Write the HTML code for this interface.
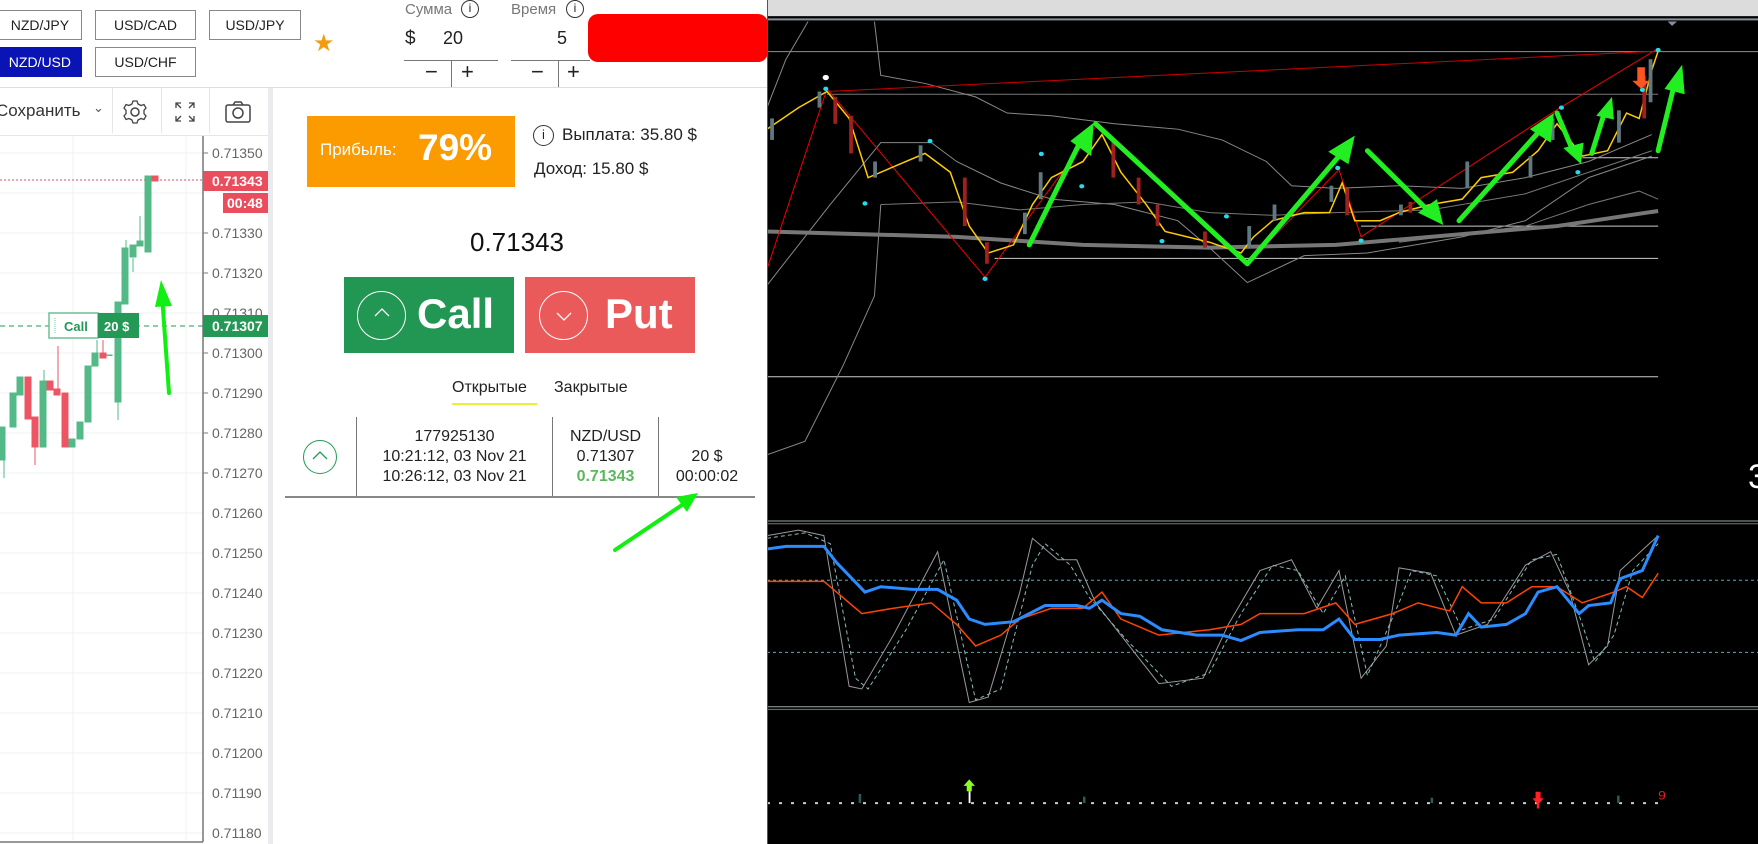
<!DOCTYPE html>
<html><head><meta charset="utf-8"><style>
*{margin:0;padding:0;box-sizing:border-box}
body{width:1758px;height:844px;overflow:hidden;background:#fff;position:relative;font-family:"Liberation Sans",sans-serif;color:#222}
.a{position:absolute}
.pb{position:absolute;border:1px solid #888;background:#fff;font-size:14px;text-align:center;color:#222}
.t{position:absolute;white-space:nowrap}
</style></head><body>
<!-- top bar -->
<div class="pb" style="left:-10px;top:10px;width:92px;height:30px;line-height:28px">&nbsp;&nbsp;NZD/JPY</div>
<div class="pb" style="left:95px;top:10px;width:101px;height:30px;line-height:28px">USD/CAD</div>
<div class="pb" style="left:209px;top:10px;width:92px;height:30px;line-height:28px">USD/JPY</div>
<div class="pb" style="left:-10px;top:47px;width:92px;height:30px;line-height:28px;background:#0a14b4;color:#fff;border-color:#0a14b4">&nbsp;&nbsp;NZD/USD</div>
<div class="pb" style="left:95px;top:47px;width:101px;height:30px;line-height:28px">USD/CHF</div>
<div class="t" style="left:313px;top:29px;font-size:24px;color:#f39c12">★</div>
<div class="t" style="left:405px;top:1px;font-size:15px;color:#777">Сумма</div>
<div class="a" style="left:461px;top:0px;width:18px;height:18px;border:1.5px solid #333;border-radius:50%;font-size:12px;text-align:center;line-height:15px">i</div>
<div class="t" style="left:405px;top:28px;font-size:19px">$</div>
<div class="t" style="left:443px;top:28px;font-size:18px">20</div>
<div class="a" style="left:404px;top:60px;width:94px;height:1px;background:#777"></div>
<div class="a" style="left:451px;top:60px;width:1px;height:27px;background:#777"></div>
<div class="t" style="left:425px;top:59px;font-size:22px">−</div>
<div class="t" style="left:461px;top:59px;font-size:22px">+</div>
<div class="t" style="left:511px;top:1px;font-size:15px;color:#777">Время</div>
<div class="a" style="left:566px;top:0px;width:18px;height:18px;border:1.5px solid #333;border-radius:50%;font-size:12px;text-align:center;line-height:15px">i</div>
<div class="t" style="left:557px;top:28px;font-size:18px">5</div>
<div class="a" style="left:511px;top:60px;width:79px;height:1px;background:#777"></div>
<div class="a" style="left:558px;top:60px;width:1px;height:27px;background:#777"></div>
<div class="t" style="left:531px;top:59px;font-size:22px">−</div>
<div class="t" style="left:567px;top:59px;font-size:22px">+</div>
<div class="a" style="left:588px;top:14px;width:180px;height:48px;background:#ff0000;border-radius:10px"></div>
<div class="a" style="left:0;top:87px;width:767px;height:1px;background:#ddd"></div>

<!-- toolbar -->
<div class="t" style="left:-4px;top:101px;font-size:17px;color:#333">Сохранить</div>
<div class="t" style="left:93px;top:100px;font-size:13px;color:#555">⌄</div>
<div class="a" style="left:112px;top:88px;width:1px;height:45px;background:#e6e6e6"></div>
<div class="a" style="left:161px;top:88px;width:1px;height:45px;background:#e6e6e6"></div>
<div class="a" style="left:209px;top:88px;width:1px;height:45px;background:#e6e6e6"></div>
<div class="a" style="left:0;top:135px;width:268px;height:1px;background:#e6e6e6"></div>
<svg class="a" style="left:122px;top:99px" width="26" height="26" viewBox="0 0 26 26"><circle cx="13" cy="13" r="4" fill="none" stroke="#444" stroke-width="1.5"/><path d="M11 2h4l1 3 3 1.5 3-1 2 3.5-2 2.3v3.4l2 2.3-2 3.5-3-1-3 1.5-1 3h-4l-1-3-3-1.5-3 1-2-3.5 2-2.3v-3.4l-2-2.3 2-3.5 3 1 3-1.5z" fill="none" stroke="#444" stroke-width="1.3"/></svg>
<svg class="a" style="left:174px;top:101px" width="22" height="22" viewBox="0 0 22 22" fill="none" stroke="#444" stroke-width="1.3"><path d="M2 7V2h5M2 2l5 5M20 7V2h-5M20 2l-5 5M2 15v5h5M2 20l5-5M20 15v5h-5M20 20l-5-5"/></svg>
<svg class="a" style="left:224px;top:100px" width="28" height="24" viewBox="0 0 28 24" fill="none" stroke="#444" stroke-width="1.5"><rect x="2" y="5" width="24" height="17" rx="2"/><path d="M9 5l2-3h6l2 3"/><circle cx="14" cy="13" r="5"/></svg>

<!-- left chart -->
<svg class="a" style="left:0;top:136px" width="268" height="708" viewBox="0 136 268 708">
<g stroke="#edf1f5" stroke-width="1">
<line x1="73" y1="136" x2="73" y2="840"/><line x1="186" y1="136" x2="186" y2="840"/>
<line x1="0" y1="153" x2="203" y2="153"/><line x1="0" y1="193" x2="203" y2="193"/><line x1="0" y1="233" x2="203" y2="233"/><line x1="0" y1="273" x2="203" y2="273"/><line x1="0" y1="313" x2="203" y2="313"/><line x1="0" y1="353" x2="203" y2="353"/><line x1="0" y1="393" x2="203" y2="393"/><line x1="0" y1="433" x2="203" y2="433"/><line x1="0" y1="473" x2="203" y2="473"/><line x1="0" y1="513" x2="203" y2="513"/><line x1="0" y1="553" x2="203" y2="553"/><line x1="0" y1="593" x2="203" y2="593"/><line x1="0" y1="633" x2="203" y2="633"/><line x1="0" y1="673" x2="203" y2="673"/><line x1="0" y1="713" x2="203" y2="713"/><line x1="0" y1="753" x2="203" y2="753"/><line x1="0" y1="793" x2="203" y2="793"/><line x1="0" y1="833" x2="203" y2="833"/>
</g>
<line x1="203" y1="136" x2="203" y2="842" stroke="#777" stroke-width="1.5"/>
<line x1="0" y1="842" x2="203" y2="842" stroke="#777" stroke-width="1.5"/>
<line x1="0" y1="180" x2="203" y2="180" stroke="#e84a5f" stroke-width="1" stroke-dasharray="2,2"/>
<line x1="0" y1="326" x2="203" y2="326" stroke="#239955" stroke-width="1" stroke-dasharray="5,4"/>
<g stroke-width="1">
<g fill="#52b987" stroke="#52b987">
<rect x="-1" y="427" width="6" height="33"/><rect x="10" y="393" width="6" height="34"/><rect x="17" y="377" width="6" height="18"/><rect x="40" y="381" width="6" height="66"/><rect x="69" y="439" width="6" height="8"/><rect x="77" y="422" width="6" height="17"/><rect x="85" y="366" width="6" height="56"/><rect x="92" y="353" width="6" height="13"/><rect x="107" y="355" width="5" height="0.5"/><rect x="115" y="302" width="6" height="100"/><rect x="122" y="248" width="6" height="56"/><rect x="122" y="248" width="6" height="0"/><rect x="123" y="249" width="5" height="20"/><rect x="130" y="245" width="6" height="12"/><rect x="137" y="241" width="6" height="5"/><rect x="145" y="176" width="6" height="76"/>
<line x1="4" y1="460" x2="4" y2="478"/><line x1="44" y1="370" x2="44" y2="381"/><line x1="97" y1="340" x2="97" y2="353"/><line x1="118" y1="385" x2="118" y2="420"/><line x1="126" y1="240" x2="126" y2="270"/><line x1="133" y1="258" x2="133" y2="272"/><line x1="140" y1="216" x2="140" y2="246"/>
</g>
<g fill="#ed5564" stroke="#ed5564">
<rect x="25" y="377" width="6" height="42"/><rect x="32" y="417" width="6" height="30"/><rect x="47" y="381" width="6" height="9"/><rect x="54" y="389" width="6" height="6"/><rect x="62" y="393" width="6" height="54"/><rect x="100" y="353" width="6" height="5"/><rect x="152" y="176" width="6" height="5"/>
<line x1="35" y1="447" x2="35" y2="465"/><line x1="58" y1="346" x2="58" y2="392"/><line x1="103" y1="340" x2="103" y2="353"/>
</g>
</g>
<g font-size="14" fill="#666" font-family="Liberation Sans,sans-serif">
<text x="212" y="158">0.71350</text><text x="212" y="238">0.71330</text><text x="212" y="278">0.71320</text><text x="212" y="318">0.71310</text><text x="212" y="358">0.71300</text><text x="212" y="398">0.71290</text><text x="212" y="438">0.71280</text><text x="212" y="478">0.71270</text><text x="212" y="518">0.71260</text><text x="212" y="558">0.71250</text><text x="212" y="598">0.71240</text><text x="212" y="638">0.71230</text><text x="212" y="678">0.71220</text><text x="212" y="718">0.71210</text><text x="212" y="758">0.71200</text><text x="212" y="798">0.71190</text><text x="212" y="838">0.71180</text>
</g>
<g stroke="#777"><line x1="203" y1="153" x2="208" y2="153"/><line x1="203" y1="233" x2="208" y2="233"/><line x1="203" y1="273" x2="208" y2="273"/><line x1="203" y1="353" x2="208" y2="353"/><line x1="203" y1="393" x2="208" y2="393"/><line x1="203" y1="433" x2="208" y2="433"/><line x1="203" y1="473" x2="208" y2="473"/></g>
<rect x="203" y="171" width="65" height="20" fill="#ea4d5c"/><text x="212" y="186" font-size="14" font-weight="bold" fill="#fff">0.71343</text>
<rect x="223" y="193" width="45" height="20" fill="#ea4d5c"/><text x="227" y="208" font-size="14" font-weight="bold" fill="#fff">00:48</text>
<rect x="203" y="315" width="65" height="22" fill="#239955"/><text x="212" y="331" font-size="14" font-weight="bold" fill="#fff">0.71307</text>
<rect x="49" y="313" width="49" height="25" fill="#fff" stroke="#6cc096" stroke-width="1.5"/><text x="64" y="331" font-size="13" font-weight="bold" fill="#239955">Call</text>
<line x1="55" y1="318" x2="55" y2="333" stroke="#6cc096" stroke-dasharray="1,1"/>
<rect x="98" y="313" width="41" height="25" fill="#239955"/><text x="104" y="331" font-size="13" font-weight="bold" fill="#fff">20 $</text>
<path d="M169 393 L162 295" stroke="#11ee11" stroke-width="4" stroke-linecap="round"/><path d="M155 307 L161 280 L172 306 Z" fill="#11ee11"/>
</svg>
<div class="a" style="left:268px;top:88px;width:5px;height:756px;background:#e9ebee"></div>

<!-- right panel -->
<div class="a" style="left:307px;top:116px;width:208px;height:71px;background:#fb9b00"></div>
<div class="t" style="left:320px;top:140px;font-size:17px;color:#fff">Прибыль:</div>
<div class="t" style="left:418px;top:127px;font-size:37px;font-weight:bold;color:#fff">79%</div>
<div class="a" style="left:533px;top:125px;width:21px;height:21px;border:1.5px solid #333;border-radius:50%;font-size:13px;text-align:center;line-height:18px">i</div>
<div class="t" style="left:562px;top:125px;font-size:17px">Выплата: 35.80 $</div>
<div class="t" style="left:534px;top:159px;font-size:17px">Доход: 15.80 $</div>
<div class="t" style="left:470px;top:227px;font-size:26px;color:#111">0.71343</div>
<div class="a" style="left:344px;top:277px;width:170px;height:76px;background:#229653"></div>
<div class="a" style="left:357px;top:291px;width:49px;height:49px;border:1.5px solid #fff;border-radius:50%"></div>
<svg class="a" style="left:372px;top:306px" width="20" height="14"><path d="M3 10 L10 3 L17 10" fill="none" stroke="#fff" stroke-width="1.3"/></svg>
<div class="t" style="left:417px;top:290px;font-size:42px;font-weight:bold;color:#fff">Call</div>
<div class="a" style="left:525px;top:277px;width:170px;height:76px;background:#ea5a5a"></div>
<div class="a" style="left:539px;top:291px;width:49px;height:49px;border:1.5px solid #fff;border-radius:50%"></div>
<svg class="a" style="left:554px;top:310px" width="20" height="14"><path d="M3 3 L10 10 L17 3" fill="none" stroke="#fff" stroke-width="1.3"/></svg>
<div class="t" style="left:605px;top:290px;font-size:42px;font-weight:bold;color:#fff">Put</div>
<div class="t" style="left:452px;top:379px;font-size:16px">Открытые</div>
<div class="a" style="left:452px;top:403px;width:85px;height:2px;background:#e8f03a"></div>
<div class="t" style="left:554px;top:379px;font-size:16px">Закрытые</div>
<div class="a" style="left:356px;top:417px;width:1px;height:80px;background:#777"></div>
<div class="a" style="left:552px;top:417px;width:1px;height:80px;background:#777"></div>
<div class="a" style="left:658px;top:417px;width:1px;height:80px;background:#777"></div>
<div class="a" style="left:285px;top:496px;width:470px;height:1.5px;background:#888"></div>
<div class="a" style="left:303px;top:440px;width:34px;height:34px;border:1.3px solid #239955;border-radius:50%"></div>
<svg class="a" style="left:310px;top:449px" width="20" height="14"><path d="M3 10 L10 3 L17 10" fill="none" stroke="#239955" stroke-width="1.3"/></svg>
<div class="t" style="left:357px;top:427px;width:195px;text-align:center;font-size:16px;line-height:20px">177925130<br>10:21:12, 03 Nov 21<br>10:26:12, 03 Nov 21</div>
<div class="t" style="left:553px;top:427px;width:105px;text-align:center;font-size:16px;line-height:20px">NZD/USD<br>0.71307<br><b style="color:#5cb85c">0.71343</b></div>
<div class="t" style="left:659px;top:447px;width:96px;text-align:center;font-size:16px;line-height:20px">20 $<br>00:00:02</div>
<svg class="a" style="left:600px;top:490px" width="110" height="70"><path d="M15 60 L85 13" stroke="#11ee11" stroke-width="4" stroke-linecap="round"/><path d="M76 7 L98 3 L87 22 Z" fill="#11ee11"/></svg>

<!-- black chart -->
<svg class="a" style="left:767px;top:0" width="991" height="844" viewBox="0 0 1568 1568" preserveAspectRatio="none">
<rect x="0" y="0" width="1568" height="1568" fill="#000"/>
<rect x="0" y="0" width="1568" height="30" fill="#dcdcdc"/>
<g fill="none" vector-effect="non-scaling-stroke">
<line x1="0" y1="36" x2="1568" y2="36" stroke="#8890a0" stroke-width="2" vector-effect="non-scaling-stroke"/>
<line x1="0" y1="96" x2="1568" y2="96" stroke="#8a8fa0" vector-effect="non-scaling-stroke"/>
<line x1="95" y1="175" x2="1410" y2="175" stroke="#777" vector-effect="non-scaling-stroke"/>
<line x1="1290" y1="293" x2="1410" y2="293" stroke="#ccc" vector-effect="non-scaling-stroke"/>
<line x1="940" y1="420" x2="1410" y2="420" stroke="#ccc" vector-effect="non-scaling-stroke"/>
<line x1="360" y1="480" x2="1410" y2="480" stroke="#ccc" vector-effect="non-scaling-stroke"/>
<line x1="0" y1="700" x2="1410" y2="700" stroke="#ccc" vector-effect="non-scaling-stroke"/>
<polyline vector-effect="non-scaling-stroke" stroke="#888" points="170,40 180,140 250,155 330,180 380,210 450,215 550,230 650,240 720,260 790,300 830,345 900,350 1000,345 1100,350 1200,330 1300,300 1400,250"/>
<polyline vector-effect="non-scaling-stroke" stroke="#888" points="0,200 30,110 65,40"/>
<polyline vector-effect="non-scaling-stroke" stroke="#888" points="180,380 170,550 120,680 60,820 0,845"/>
<polyline vector-effect="non-scaling-stroke" stroke="#888" points="0,530 100,380 180,265 260,265 300,300 370,340 450,370 550,380 650,410 700,460 760,525 850,475 950,470 1100,440 1200,410 1300,330 1400,290"/>
<polyline vector-effect="non-scaling-stroke" stroke="#777" points="180,380 300,375 400,390 500,380 600,375 700,395 800,400 900,395 1050,390 1200,360 1300,320 1400,280"/>
<polyline vector-effect="non-scaling-stroke" stroke="#777" points="1000,450 1200,420 1300,380 1380,355 1410,370"/>
<polyline vector-effect="non-scaling-stroke" stroke="#777" stroke-width="4" points="0,430 300,440 500,455 700,460 900,455 1100,435 1250,420 1410,392"/>
<polyline vector-effect="non-scaling-stroke" stroke="#e00" points="0,500 95,165 345,515 520,235 760,490 905,315 940,440 1255,200 1410,90"/>
<line x1="95" y1="170" x2="1410" y2="95" stroke="#c00" vector-effect="non-scaling-stroke"/>
<polyline vector-effect="non-scaling-stroke" stroke="#ffcc00" stroke-width="1.5" points="0,240 50,200 95,170 130,220 160,330 200,310 250,285 290,320 320,420 350,470 390,455 420,380 450,330 500,300 530,250 560,320 600,380 630,430 700,450 750,470 770,440 800,410 850,395 890,395 910,340 930,410 970,410 1000,395 1050,380 1100,370 1130,330 1180,320 1220,280 1250,230 1290,290 1330,280 1360,210 1380,220 1400,130 1410,95"/>
</g>
<g fill="#607880">
<rect x="5" y="220" width="6" height="40"/><rect x="80" y="170" width="6" height="30"/><rect x="168" y="300" width="6" height="30"/><rect x="240" y="270" width="6" height="30"/><rect x="430" y="320" width="6" height="50"/><rect x="405" y="395" width="6" height="40"/><rect x="800" y="380" width="6" height="30"/><rect x="890" y="345" width="6" height="30"/><rect x="1000" y="380" width="6" height="20"/><rect x="1105" y="300" width="6" height="50"/><rect x="1205" y="290" width="6" height="40"/><rect x="1345" y="205" width="6" height="60"/><rect x="1395" y="110" width="6" height="80"/><rect x="1240" y="220" width="6" height="40"/><rect x="760" y="420" width="6" height="40"/>
</g>
<g fill="#a02020">
<rect x="105" y="180" width="6" height="50"/><rect x="130" y="215" width="6" height="70"/><rect x="310" y="330" width="6" height="90"/><rect x="345" y="450" width="6" height="40"/><rect x="545" y="260" width="6" height="70"/><rect x="585" y="330" width="6" height="50"/><rect x="615" y="380" width="6" height="40"/><rect x="690" y="430" width="6" height="30"/><rect x="915" y="350" width="6" height="50"/><rect x="1015" y="375" width="6" height="20"/><rect x="1385" y="140" width="6" height="80"/>
</g>
<g fill="#22ee22">
<polyline points="415,455 495,265" fill="none" stroke="#22ee22" stroke-width="5" vector-effect="non-scaling-stroke" stroke-linecap="round"/><polygon points="480,262 517,228 513,290"/>
<polyline points="520,230 760,490 905,290" fill="none" stroke="#22ee22" stroke-width="5" vector-effect="non-scaling-stroke" stroke-linecap="round" stroke-linejoin="round"/><polygon points="888,282 930,252 920,305"/>
<polyline points="950,280 1045,390" fill="none" stroke="#22ee22" stroke-width="5" vector-effect="non-scaling-stroke" stroke-linecap="round"/><polygon points="1030,395 1070,418 1060,370"/>
<polyline points="1095,410 1225,240" fill="none" stroke="#22ee22" stroke-width="5" vector-effect="non-scaling-stroke" stroke-linecap="round"/><polygon points="1207,240 1245,210 1240,265"/>
<polyline points="1250,210 1275,280" fill="none" stroke="#22ee22" stroke-width="5" vector-effect="non-scaling-stroke" stroke-linecap="round"/><polygon points="1260,275 1288,305 1292,265"/>
<polyline points="1305,285 1325,210" fill="none" stroke="#22ee22" stroke-width="5" vector-effect="non-scaling-stroke" stroke-linecap="round"/><polygon points="1312,215 1337,180 1340,222"/>
<polyline points="1410,280 1435,160" fill="none" stroke="#22ee22" stroke-width="5" vector-effect="non-scaling-stroke" stroke-linecap="round"/><polygon points="1420,165 1448,120 1452,175"/>
</g>
<g fill="#22ddee"><circle cx="93" cy="165" r="4"/><circle cx="155" cy="378" r="4"/><circle cx="258" cy="262" r="4"/><circle cx="345" cy="518" r="4"/><circle cx="434" cy="286" r="4"/><circle cx="498" cy="346" r="4"/><circle cx="625" cy="448" r="4"/><circle cx="727" cy="402" r="4"/><circle cx="903" cy="312" r="4"/><circle cx="940" cy="447" r="4"/><circle cx="1257" cy="200" r="4"/><circle cx="1283" cy="320" r="4"/><circle cx="1385" cy="167" r="4"/><circle cx="1410" cy="93" r="4"/></g>
<circle cx="93" cy="144" r="5" fill="#fff"/>
<path d="M1377 125v25h-8l14 15 14-15h-8v-25z" fill="#ff5522"/>
<g fill="none" vector-effect="non-scaling-stroke">
<line x1="0" y1="968" x2="1568" y2="968" stroke="#9aa" stroke-width="1" vector-effect="non-scaling-stroke"/>
<line x1="0" y1="973" x2="1568" y2="973" stroke="#777" stroke-width="1" vector-effect="non-scaling-stroke"/>
<line x1="0" y1="1313" x2="1568" y2="1313" stroke="#9aa" vector-effect="non-scaling-stroke"/>
<line x1="0" y1="1318" x2="1568" y2="1318" stroke="#777" vector-effect="non-scaling-stroke"/>
<line x1="0" y1="1078" x2="1568" y2="1078" stroke="#6aa" stroke-dasharray="3,3" vector-effect="non-scaling-stroke"/>
<line x1="0" y1="1212" x2="1568" y2="1212" stroke="#6aa" stroke-dasharray="3,3" vector-effect="non-scaling-stroke"/>
<polyline vector-effect="non-scaling-stroke" stroke="#999" points="0,995 50,985 90,995 130,1275 150,1280 200,1180 270,1025 320,1305 350,1295 400,1100 420,1000 460,1040 490,1040 520,1120 560,1180 620,1270 690,1260 730,1160 780,1060 830,1040 870,1130 905,1060 940,1260 980,1200 1000,1055 1050,1065 1090,1180 1140,1160 1200,1050 1240,1025 1270,1100 1300,1235 1330,1200 1350,1060 1410,995"/>
<polyline vector-effect="non-scaling-stroke" stroke="#8bb" stroke-dasharray="4,3" points="0,1000 60,990 100,1010 140,1260 160,1280 220,1170 280,1040 330,1300 370,1280 420,1050 440,1010 480,1050 510,1110 570,1190 640,1275 700,1250 750,1140 800,1050 840,1060 880,1140 915,1070 950,1255 1000,1120 1020,1060 1060,1070 1100,1170 1150,1150 1210,1040 1250,1030 1290,1160 1310,1230 1340,1180 1370,1060 1410,1010"/>
<polyline vector-effect="non-scaling-stroke" stroke="#ff4400" stroke-width="1.5" points="0,1080 90,1080 110,1100 150,1140 200,1130 260,1120 300,1160 330,1200 370,1180 400,1150 450,1130 500,1130 530,1100 560,1150 620,1180 700,1170 750,1160 780,1140 850,1140 900,1120 930,1160 990,1140 1030,1120 1080,1135 1100,1090 1130,1120 1170,1120 1210,1090 1250,1090 1290,1120 1340,1100 1360,1090 1385,1110 1410,1065"/>
<polyline vector-effect="non-scaling-stroke" stroke="#2a8cff" stroke-width="3" points="0,1020 30,1015 90,1015 110,1045 155,1100 180,1090 230,1095 270,1095 300,1115 320,1150 345,1160 390,1155 440,1125 490,1125 510,1130 530,1115 560,1140 590,1145 625,1170 680,1180 720,1180 750,1190 780,1175 840,1170 880,1170 905,1150 930,1188 970,1188 1000,1180 1060,1175 1090,1180 1110,1140 1130,1165 1170,1160 1200,1140 1220,1100 1250,1090 1285,1140 1300,1125 1335,1120 1350,1075 1385,1060 1410,995"/>
<line x1="0" y1="1492" x2="1410" y2="1492" stroke="#ccc" stroke-width="2" stroke-dasharray="3,9" vector-effect="non-scaling-stroke"/>
</g>
<g fill="#2a5a5a"><rect x="145" y="1475" width="4" height="17"/><rect x="500" y="1480" width="4" height="12"/><rect x="1345" y="1478" width="4" height="14"/><rect x="1050" y="1482" width="4" height="10"/></g>
<path d="M320 1448 l-9 12h5v10h8v-10h5z" fill="#88ff22"/><rect x="319" y="1470" width="3" height="22" fill="#fff"/>
<path d="M1220 1495 l-9-12h5v-12h8v12h5z" fill="#ff2020"/><rect x="1218" y="1490" width="4" height="12" fill="#ff2020"/>
<text x="1410" y="1485" font-size="22" fill="#e02020" font-family="Liberation Sans">9</text>
<polygon points="1425,40 1440,40 1432,48" fill="#8890a0"/>
</svg>
<div class="a" style="left:767px;top:0;width:1px;height:844px;background:#555"></div>
<div class="t" style="left:1748px;top:458px;font-size:34px;color:#fff">3</div>
</body></html>
